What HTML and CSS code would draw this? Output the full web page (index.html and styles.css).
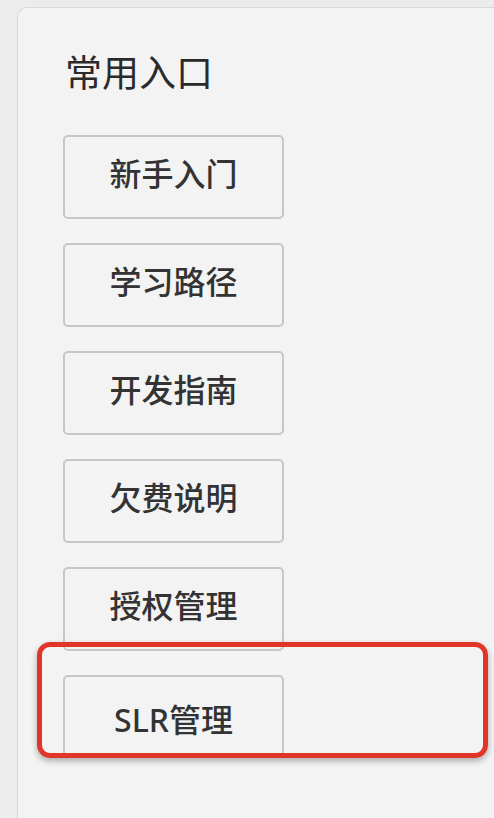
FILE: index.html
```html
<!DOCTYPE html>
<html lang="zh-CN">
<head>
    <meta charset="UTF-8">
    <meta name="viewport" content="width=device-width, initial-scale=1.0">
    <title>常用入口</title>
    <link rel="stylesheet" href="styles.css">
</head>
<body>
    <div class="card">
        <h2 class="card-title">常用入口</h2>
        <div class="entry-list">
            <a class="entry-btn" href="#">新手入门</a>
            <a class="entry-btn" href="#">学习路径</a>
            <a class="entry-btn" href="#">开发指南</a>
            <a class="entry-btn" href="#">欠费说明</a>
            <a class="entry-btn" href="#">授权管理</a>
            <a class="entry-btn entry-btn-cut" href="#">SLR管理</a>
        </div>
    </div>

    <!-- annotation box -->
    <div class="highlight"></div>
</body>
</html>
```

FILE: styles.css
```css
html, body {
    height: 100%;
    overflow: hidden;
}
body {
    font-family: "Noto Sans", "Noto Sans CJK SC", sans-serif;
    background-color: #ececec;
    margin: 0;
    padding: 7px 0 0 17px;
    box-sizing: border-box;
}
.card {
    box-sizing: border-box;
    height: 100%;
    background-color: #f3f3f3;
    border: 1.5px solid #d9d9d9;
    border-bottom: none;
    border-right: none;
    border-radius: 10px 0 0 0;
    padding: 0 0 0 45px;
}
.card-title {
    margin: 0;
    padding: 43px 0 0 2px;
    font-size: 37px;
    font-weight: 400;
    line-height: 44px;
    color: #2a2a2a;
}
.entry-list {
    display: flex;
    flex-direction: column;
    gap: 24px;
    margin-top: 40px;
}
.entry-btn {
    display: flex;
    align-items: center;
    justify-content: center;
    box-sizing: border-box;
    width: 221px;
    height: 84px;
    padding-bottom: 10px;
    border: 2px solid #c4c7cb;
    border-radius: 5px;
    font-size: 32px;
    font-weight: 500;
    color: #333;
    text-decoration: none;
}
.entry-btn-cut {
    height: 82px;
    padding-bottom: 0;
    padding-top: 2px;
    border-bottom: none;
    border-radius: 5px 5px 0 0;
}
.highlight {
    position: absolute;
    left: 37px;
    top: 642px;
    width: 451px;
    height: 116px;
    box-sizing: border-box;
    border: 5px solid #e2352a;
    border-radius: 13px;
    box-shadow: 0 3px 6px rgba(0, 0, 0, 0.3);
}
```
